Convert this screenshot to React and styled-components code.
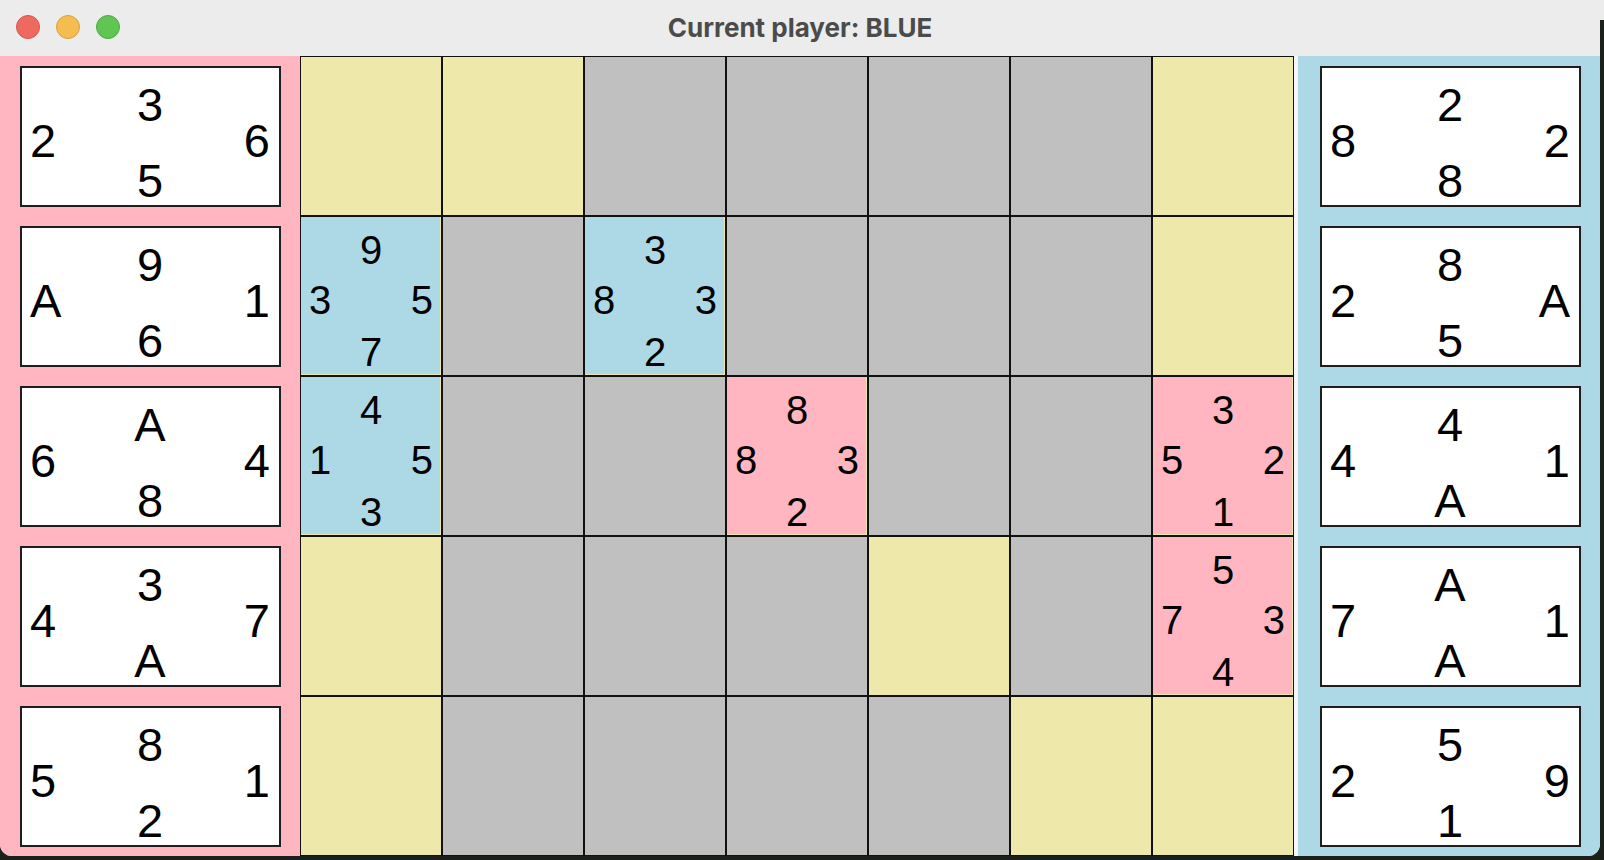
import React from 'react';
import styled, { createGlobalStyle } from 'styled-components';

const GlobalStyle = createGlobalStyle`
  html, body {
    margin: 0;
    padding: 0;
  }
  body {
    width: 1604px;
    height: 860px;
    overflow: hidden;
    background: linear-gradient(to bottom, #ececec 0, #ececec 20px, #1c201d 20px);
    font-family: "Liberation Sans", Arial, sans-serif;
  }
`;

const COLORS = {
  pink: '#ffb6c1',
  blue: '#add8e6',
  gray: '#c0c0c0',
  yellow: '#eee8aa',
};

// hands: [north, west, east, south]
const redHand = [
  ['3', '2', '6', '5'],
  ['9', 'A', '1', '6'],
  ['A', '6', '4', '8'],
  ['3', '4', '7', 'A'],
  ['8', '5', '1', '2'],
];

const blueHand = [
  ['2', '8', '2', '8'],
  ['8', '2', 'A', '5'],
  ['4', '4', '1', 'A'],
  ['A', '7', '1', 'A'],
  ['5', '2', '9', '1'],
];

const Y = { kind: 'yellow' };
const G = { kind: 'gray' };
const B = (v) => ({ kind: 'blue', values: v });
const P = (v) => ({ kind: 'pink', values: v });

const board = [
  [Y, Y, G, G, G, G, Y],
  [B(['9', '3', '5', '7']), G, B(['3', '8', '3', '2']), G, G, G, Y],
  [B(['4', '1', '5', '3']), G, G, P(['8', '8', '3', '2']), G, G, P(['3', '5', '2', '1'])],
  [Y, G, G, G, Y, G, P(['5', '7', '3', '4'])],
  [Y, G, G, G, G, Y, Y],
];

const Values = ({ values, Grid }) => (
  <Grid>
    <North>{values[0]}</North>
    <West>{values[1]}</West>
    <East>{values[2]}</East>
    <South>{values[3]}</South>
  </Grid>
);

const App = () => {
  return (
    <>
      <GlobalStyle />
      <Window>
        <TitleBar>
          <Lights>
            <Light $color="#ee6a5f" $edge="#d6564c" />
            <Light $color="#f5bd4f" $edge="#d9a13a" />
            <Light $color="#61c554" $edge="#4ea944" />
          </Lights>
          <Title>Current player: BLUE</Title>
        </TitleBar>

        <Body>
          <Hand $color={COLORS.pink} $left>
            {redHand.map((v, i) => (
              <Card key={i}>
                <Values values={v} Grid={CardGrid} />
              </Card>
            ))}
          </Hand>

          <Board>
            {board.flat().map((cell, i) => (
              <Cell key={i} $color={COLORS[cell.kind]} $placed={!!cell.values}>
                {cell.values && <Values values={cell.values} Grid={TileGrid} />}
              </Cell>
            ))}
          </Board>

          <Divider />

          <Hand $color={COLORS.blue}>
            {blueHand.map((v, i) => (
              <Card key={i}>
                <Values values={v} Grid={CardGrid} />
              </Card>
            ))}
          </Hand>
        </Body>
      </Window>
    </>
  );
};

const Window = styled.div`
  width: 1600px;
  height: 856px;
  border-radius: 12px;
  overflow: hidden;
  display: flex;
  flex-direction: column;
  background: #ececec;
`;

const TitleBar = styled.div`
  height: 56px;
  flex-shrink: 0;
  display: flex;
  align-items: center;
  justify-content: center;
  position: relative;
  background: #ececec;
`;

const Lights = styled.div`
  position: absolute;
  left: 16px;
  top: 15px;
  display: flex;
  gap: 16px;
`;

const Light = styled.span`
  width: 24px;
  height: 24px;
  box-sizing: border-box;
  border-radius: 50%;
  background: ${(p) => p.$color};
  border: 1px solid ${(p) => p.$edge};
`;

const Title = styled.div`
  font-family: Inter, "Liberation Sans", sans-serif;
  font-weight: 700;
  font-size: 26px;
  color: #4b4b4b;
  margin-top: -2px;
`;

const Body = styled.div`
  flex: 1;
  display: flex;
  min-height: 0;
`;

const Hand = styled.div`
  width: ${(p) => (p.$left ? '300px' : '302px')};
  flex-shrink: 0;
  box-sizing: border-box;
  background: ${(p) => p.$color};
  padding: ${(p) => (p.$left ? '10px 19px 0 20px' : '10px 19px 0 22px')};
  display: flex;
  flex-direction: column;
  gap: 19px;
`;

const Card = styled.div`
  width: 261px;
  height: 141px;
  box-sizing: border-box;
  background: #fff;
  border: 2px solid #1e1e1e;
`;

const CardGrid = styled.div`
  display: grid;
  grid-template-columns: auto 1fr auto;
  grid-template-rows: 36px 40px 38px;
  padding: 18px 9px 0 8px;
  font-size: 47px;
  line-height: 38px;
  color: #000;
`;

const TileGrid = styled.div`
  display: grid;
  grid-template-columns: auto 1fr auto;
  grid-template-rows: 50px 52px 50px;
  padding: 8px 8px 0 8px;
  font-size: 40px;
  line-height: 50px;
  color: #000;
`;

const North = styled.span`
  grid-column: 1 / 4;
  grid-row: 1;
  text-align: center;
`;

const West = styled.span`
  grid-column: 1;
  grid-row: 2;
`;

const East = styled.span`
  grid-column: 3;
  grid-row: 2;
`;

const South = styled.span`
  grid-column: 1 / 4;
  grid-row: 3;
  text-align: center;
`;

const Board = styled.div`
  width: 994px;
  flex-shrink: 0;
  display: grid;
  grid-template-columns: repeat(7, 142px);
  grid-template-rows: repeat(5, 160px);
`;

const Cell = styled.div`
  box-sizing: border-box;
  border: 1px solid #111;
  background: ${(p) => p.$color};
  box-shadow: ${(p) => (p.$placed ? `inset -1px -1px 0 ${COLORS.yellow}` : 'none')};
`;

const Divider = styled.div`
  width: 4px;
  flex-shrink: 0;
  background: #f6f6f6;
`;

export default App;
